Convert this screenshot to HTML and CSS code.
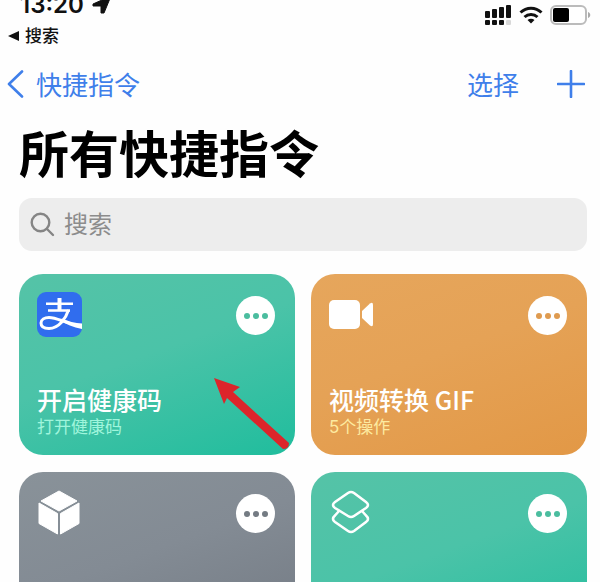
FILE: index.html
```html
<!DOCTYPE html>
<html lang="zh-CN">
<head>
    <meta charset="UTF-8">
    <meta name="viewport" content="width=device-width, initial-scale=1">
    <title>快捷指令</title>
    <link rel="stylesheet" href="styles.css">
</head>
<body>
    <header class="status-bar">
        <div class="status-left">
            <div class="time">13:20
                <svg width="20" height="20" viewBox="0 0 20 20"><path d="M1 9L19 1L12 18H9V11H1Z" fill="#111" stroke="#111" stroke-linejoin="round"/></svg>
            </div>
            <a class="return-link" href="#">
                <svg width="12" height="12" viewBox="0 0 12 12"><path d="M0 6L11 1V11Z" fill="#111"/></svg>
                搜索
            </a>
        </div>
        <div class="status-right">
            <svg width="28" height="22" viewBox="0 0 28 22" fill="#111">
                <rect x="1" y="7" width="5" height="7" rx="1"/>
                <rect x="8" y="5" width="5" height="9" rx="1"/>
                <rect x="15" y="3" width="5" height="11" rx="1"/>
                <rect x="22" y="1" width="5" height="13" rx="1"/>
                <rect x="1" y="16" width="5" height="5" rx="1"/>
                <rect x="8" y="16" width="5" height="5" rx="1"/>
                <rect x="15" y="16" width="5" height="5" rx="1"/>
                <rect x="22" y="16" width="5" height="5" rx="1" fill="#d8d8d8"/>
            </svg>
            <svg width="24" height="20" viewBox="0 0 24 20" fill="none" stroke="#111" stroke-width="3">
                <path d="M1.5 7.5C7.5 1.8 16.5 1.8 22.5 7.5"/>
                <path d="M5.5 12C9.2 8.6 14.8 8.6 18.5 12"/>
                <path d="M8.5 15C10.5 13.2 13.5 13.2 15.5 15L12 18.5Z" fill="#111" stroke="none"/>
            </svg>
            <svg width="42" height="20" viewBox="0 0 42 20">
                <rect x="1" y="1" width="35" height="18" rx="5" fill="#fff" stroke="#bbb" stroke-width="2"/>
                <rect x="3" y="3" width="16" height="14" rx="2" fill="#000"/>
                <path d="M38 7C41 8 41 12 38 13Z" fill="#aaa"/>
            </svg>
        </div>
    </header>

    <nav class="nav-bar">
        <a class="back" href="#">
            <svg width="18" height="28" viewBox="0 0 18 28"><path d="M15 1.5L2 14L15 26.5" fill="none" stroke="#3f7fea" stroke-width="2.6" stroke-linecap="round" stroke-linejoin="round"/></svg>
            快捷指令
        </a>
        <div class="nav-actions">
            <button class="text-btn">选择</button>
            <button class="text-btn" aria-label="添加">
                <svg width="28" height="28" viewBox="0 0 28 28"><path d="M14 1V27M1 14H27" fill="none" stroke="#3f7fea" stroke-width="2.6" stroke-linecap="round"/></svg>
            </button>
        </div>
    </nav>

    <main class="content">
        <h1>所有快捷指令</h1>
        <label class="search">
            <svg width="26" height="26" viewBox="0 0 26 26" fill="none" stroke="#858585" stroke-width="2.4" stroke-linecap="round"><circle cx="10.5" cy="10.5" r="8.8"/><path d="M17 17L23 23"/></svg>
            <input type="search" placeholder="搜索" aria-label="搜索">
        </label>

        <div class="shortcuts">
            <article class="card green">
                <div class="card-top">
                    <svg width="45" height="45" viewBox="0 0 45 45">
                        <rect width="45" height="45" rx="9" fill="#306dee"/>
                        <g fill="none" stroke="#fff">
                            <path d="M9 11.8H36M11 18.5H33" stroke-width="2.4"/>
                            <path d="M22.5 6V18" stroke-width="4"/>
                            <path d="M31.5 18C29 26 22 36.5 12 36.5C6.5 36.5 4 34 4 31C4 27.5 7.5 25.5 12 25.5C18 25.5 25 29 32 31" stroke-width="3"/>
                        </g>
                        <path d="M25 26.5C31 29.5 38 31 45 31.5V37C36 35.5 29 32 23 28.5Z" fill="#fff"/>
                    </svg>
                    <button class="more" aria-label="更多"><i></i><i></i><i></i></button>
                </div>
                <div class="card-text">
                    <h2>开启健康码</h2>
                    <p>打开健康码</p>
                </div>
                <svg class="arrow" width="78" height="74" viewBox="0 0 78 74"><path d="M1 1L27 10L20 15L76 66Q76 72 70 72L14 21L11 27Z" fill="#dc252b"/></svg>
            </article>

            <article class="card orange">
                <div class="card-top">
                    <svg width="45" height="45" viewBox="0 0 45 45" fill="#fff">
                        <rect x="0" y="8" width="31" height="29" rx="5"/>
                        <path d="M33 19L41 11.5Q44 9.5 44 13V32Q44 35.5 41 33.5L33 26Z"/>
                    </svg>
                    <button class="more" aria-label="更多"><i></i><i></i><i></i></button>
                </div>
                <div class="card-text">
                    <h2>视频转换 GIF</h2>
                    <p>5个操作</p>
                </div>
            </article>

            <article class="card gray">
                <div class="card-top">
                    <svg width="45" height="45" viewBox="0 0 45 45" fill="#fff" stroke="#fff" stroke-linejoin="round">
                        <path d="M22 1L40 11L22 21L4 11Z"/>
                        <path d="M2 13L20.5 23.5V44L2 33.5Z"/>
                        <path d="M42 13L23.5 23.5V44L42 33.5Z"/>
                    </svg>
                    <button class="more" aria-label="更多"><i></i><i></i><i></i></button>
                </div>
            </article>

            <article class="card green">
                <div class="card-top">
                    <svg width="45" height="45" viewBox="0 0 45 45" fill="none" stroke="#fff" stroke-width="2.6" stroke-linejoin="round">
                        <path d="M19 3Q22 1 25 3L37 12Q41 15 37 18L25 26Q22 28 19 26L6 18Q2 15 6 12Z"/>
                        <path d="M10 21L6 25.5Q2 29 6 32L19 41Q22 43 25 41L37 32Q41 29 37 25.5L33 21"/>
                    </svg>
                    <button class="more" aria-label="更多"><i></i><i></i><i></i></button>
                </div>
            </article>
        </div>
    </main>
</body>
</html>
```
FILE: styles.css
```css
* {
    box-sizing: border-box;
}
body {
    margin: 0;
    height: 100vh;
    overflow: hidden;
    background: #fefefe;
    color: #000;
    font-family: Inter, "Noto Sans CJK SC", sans-serif;
}
svg {
    display: block;
    flex-shrink: 0;
}
a {
    color: inherit;
    text-decoration: none;
}
button {
    padding: 0;
    border: none;
    background: none;
    font: inherit;
    cursor: pointer;
}
h1, h2, p {
    margin: 0;
}
.status-bar {
    display: flex;
    justify-content: space-between;
    align-items: flex-end;
    height: 48px;
    padding: 0 8px;
    overflow: hidden;
}
.time {
    display: flex;
    align-items: center;
    gap: 8px;
    padding-left: 12px;
    color: #111;
    font-size: 24px;
    font-weight: 600;
    line-height: 38px;
}
.return-link {
    display: flex;
    align-items: center;
    gap: 5px;
    color: #111;
    font-size: 17px;
    font-weight: 500;
    line-height: 24px;
}
.status-right {
    display: flex;
    align-items: center;
    gap: 7px;
    padding-bottom: 22px;
}
.nav-bar {
    display: flex;
    justify-content: space-between;
    align-items: center;
    height: 72px;
    padding: 0 15px 0 7px;
    color: #3f7fea;
    font-family: "Noto Sans CJK SC", sans-serif;
    font-size: 26px;
    line-height: 36px;
}
.back {
    display: flex;
    align-items: center;
    gap: 11px;
}
.nav-actions {
    display: flex;
    align-items: center;
    gap: 38px;
}
.text-btn {
    color: inherit;
}
.content {
    padding: 0 13px 0 19px;
}
h1 {
    font-size: 50px;
    font-weight: 700;
    line-height: 70px;
}
.search {
    display: flex;
    align-items: center;
    gap: 8px;
    height: 53px;
    margin: 8px 0 23px;
    padding: 0 11px;
    background: #ededed;
    border-radius: 13px;
}
.search input {
    flex: 1;
    min-width: 0;
    padding: 0;
    border: none;
    outline: none;
    background: none;
    font: inherit;
    font-size: 24px;
}
.search input::placeholder {
    color: #8c8c8c;
}
.shortcuts {
    display: grid;
    grid-template-columns: 1fr 1fr;
    grid-auto-rows: 181px;
    gap: 17px 16px;
}
.card {
    position: relative;
    display: flex;
    flex-direction: column;
    justify-content: space-between;
    padding: 18px;
    border-radius: 24px;
    color: #fff;
}
.card.green {
    --tint: #4bbd9f;
    --sub: #a0f5dc;
    background: linear-gradient(160deg, #55c3a7, #4bc3a8 45%, #20bd9d);
}
.card.orange {
    --tint: #df9b50;
    --sub: #fdeaa0;
    background: linear-gradient(160deg, #e6a65c, #e5a256 45%, #e29846);
}
.card.gray {
    --tint: #747b83;
    background: linear-gradient(160deg, #899299, #838b94 45%, #727982);
}
.card-top {
    display: flex;
    justify-content: space-between;
}
.more {
    display: flex;
    justify-content: center;
    align-items: center;
    gap: 3px;
    width: 39px;
    height: 39px;
    margin: 4px 2px 0 0;
    border-radius: 50%;
    background: #fff;
}
.more i {
    width: 6px;
    height: 6px;
    border-radius: 50%;
    background: var(--tint);
}
.card h2 {
    font-family: "Noto Sans CJK SC", sans-serif;
    font-size: 25px;
    font-weight: 500;
    line-height: 35px;
}
.card p {
    color: var(--sub);
    font-size: 17px;
    line-height: 20px;
}
.arrow {
    position: absolute;
    right: 4px;
    bottom: 4px;
}
```
